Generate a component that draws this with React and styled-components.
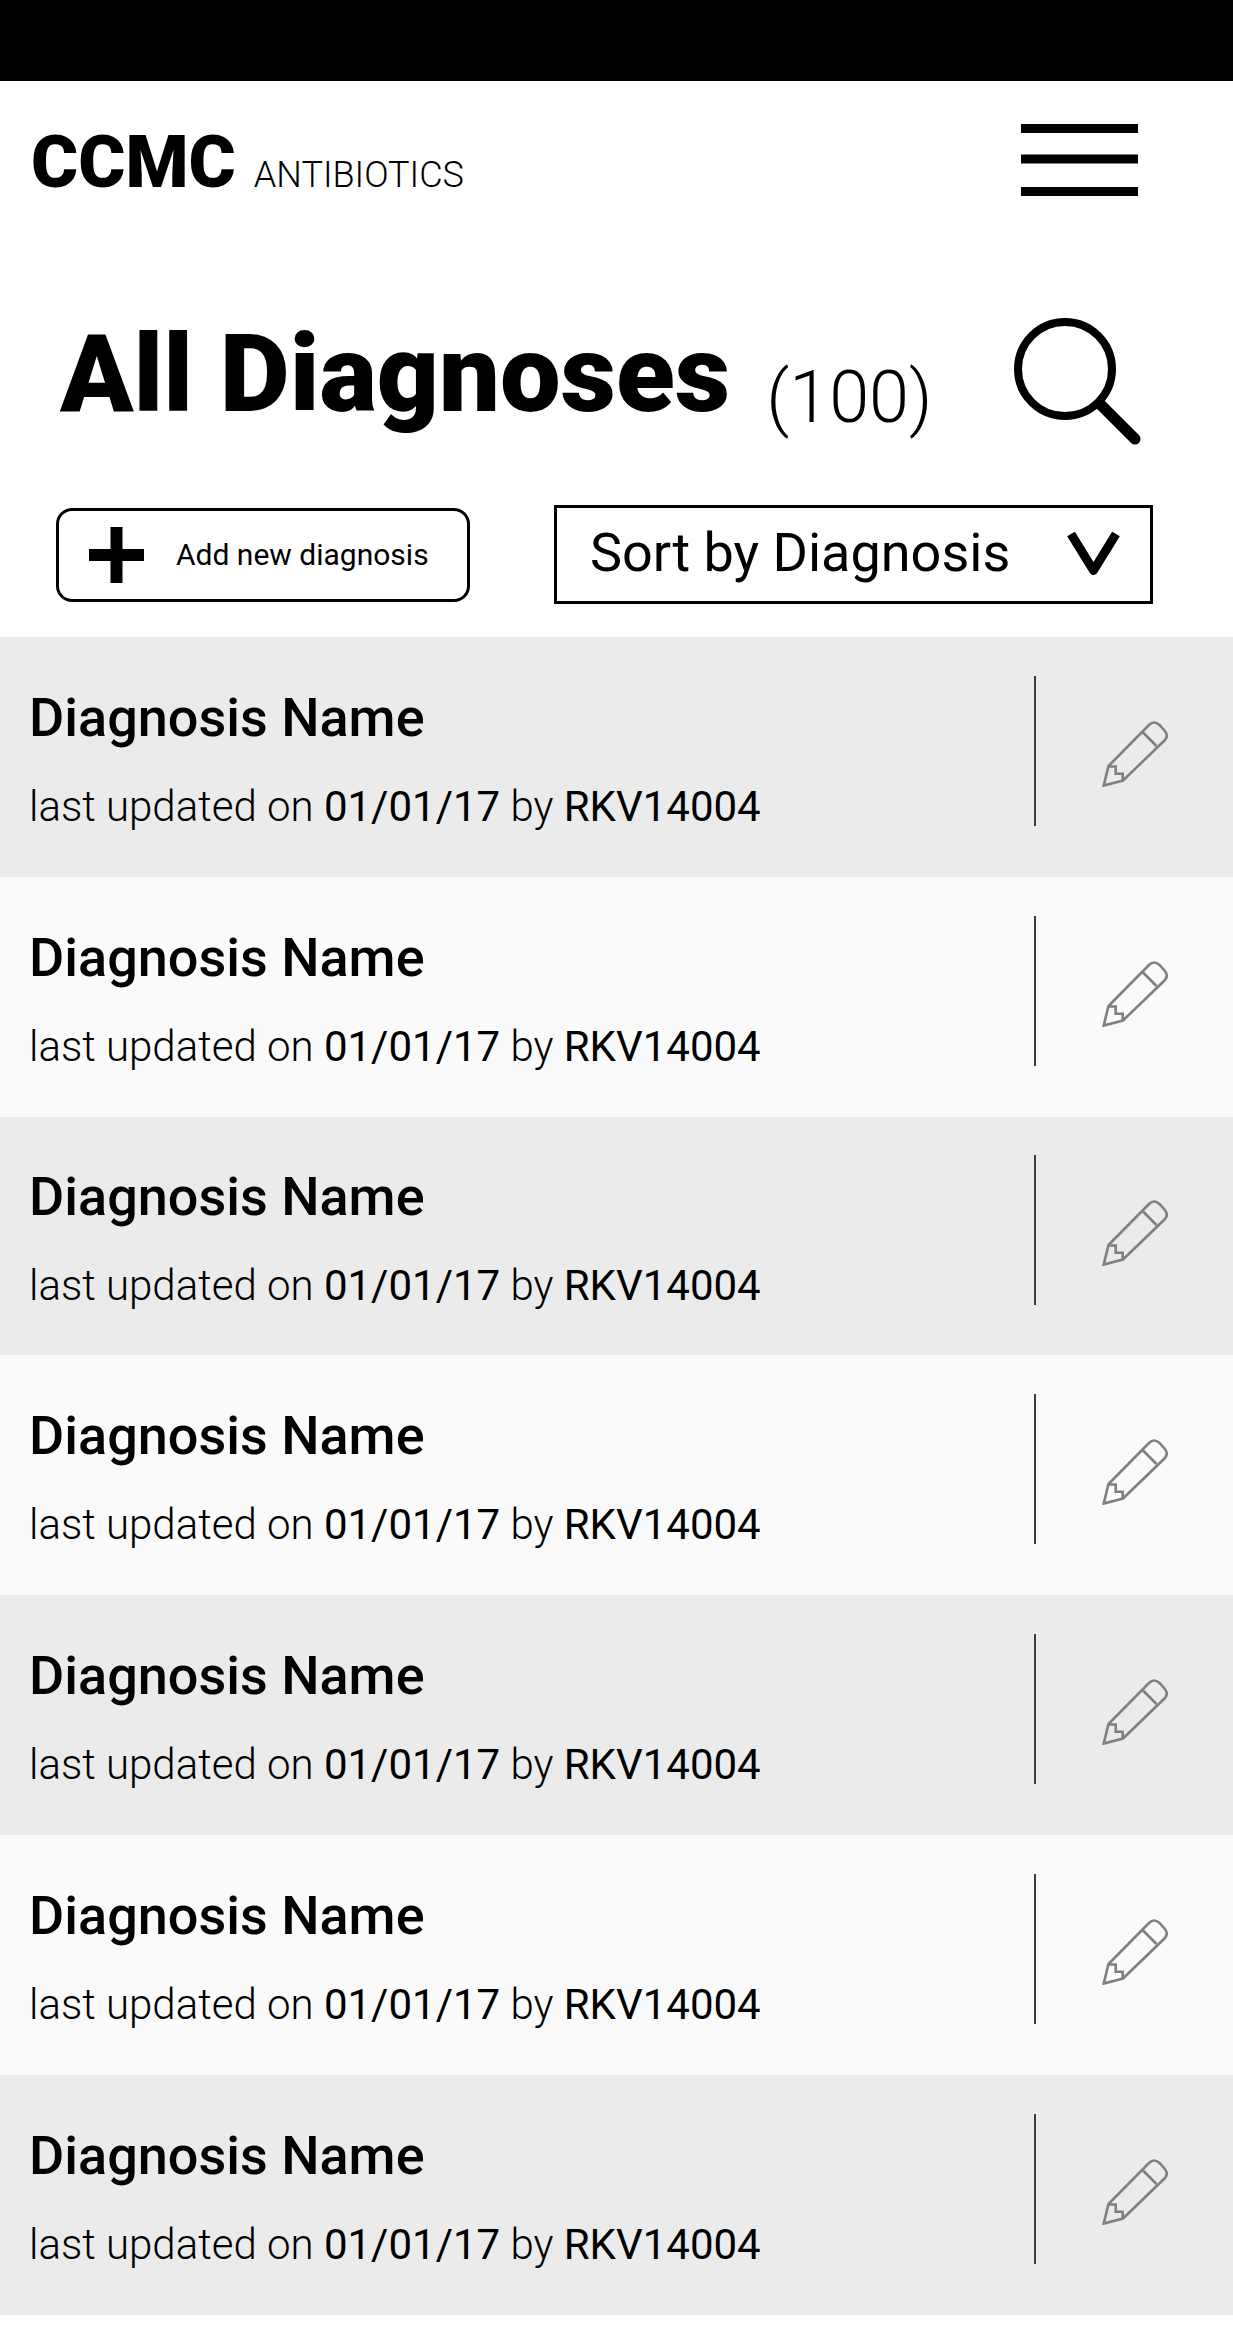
import React from "react";
import styled, { createGlobalStyle } from "styled-components";

const GlobalStyle = createGlobalStyle`
  *, *::before, *::after { box-sizing: border-box; }
  body {
    margin: 0;
    background: #fff;
    color: #000;
    font-family: Roboto, "Liberation Sans", sans-serif;
  }
  h1, h2, p, ul { margin: 0; padding: 0; }
  button { font: inherit; color: inherit; background: none; border: 0; padding: 0; cursor: pointer; }
  svg { display: block; }
`;

const StatusBar = styled.div`
  height: 81px;
  background: #000;
`;

const Header = styled.header`
  display: flex;
  justify-content: space-between;
  align-items: center;
  height: 158px;
  padding: 0 95px 0 31px;
`;

const Brand = styled.a`
  display: flex;
  align-items: baseline;
  gap: 18px;
  padding-top: 6px;
  color: inherit;
  text-decoration: none;
`;

const BrandName = styled.strong`
  font-size: 72px;
  line-height: 84px;
  font-weight: 900;
`;

const BrandSub = styled.span`
  font-size: 36px;
  font-weight: 300;
`;

const TitleBar = styled.div`
  display: flex;
  align-items: flex-end;
  justify-content: space-between;
  padding: 63px 92px 59px 60px;
`;

const Title = styled.div`
  display: flex;
  align-items: flex-end;
  gap: 36px;
`;

const Heading = styled.h1`
  font-size: 108px;
  line-height: 144px;
  font-weight: 900;
`;

const Count = styled.span`
  font-size: 72px;
  line-height: 96px;
  font-weight: 300;
`;

const Toolbar = styled.div`
  display: flex;
  align-items: center;
  justify-content: space-between;
  padding: 0 80px 33px 56px;
`;

const AddButton = styled.button`
  display: flex;
  align-items: center;
  gap: 32px;
  height: 94px;
  padding: 0 38px 0 30px;
  border: 3px solid #000;
  border-radius: 16px;
  font-size: 30px;
`;

const SortBox = styled.div`
  display: grid;
  align-items: center;
  width: 599px;
  height: 99px;
  border: 3px solid #000;

  & > * { grid-area: 1 / 1; }
  & > svg { justify-self: end; margin-right: 30px; pointer-events: none; }
`;

const SortSelect = styled.select`
  appearance: none;
  width: 100%;
  height: 100%;
  padding: 0 100px 4px 33px;
  border: 0;
  background: transparent;
  color: inherit;
  font: 400 54px Roboto, "Liberation Sans", sans-serif;
`;

const List = styled.ul`
  list-style: none;
`;

const Row = styled.li`
  display: flex;
  align-items: center;
  height: ${(p) => (p.$compact ? 238 : 240)}px;
  padding: 0 65px 12px 29px;
  background: #fafafa;

  &:nth-child(odd) { background: #ebebeb; }
`;

const Details = styled.div`
  flex: 1;
  padding-top: 16px;
`;

const Name = styled.h2`
  font-size: 54px;
  line-height: 64px;
  font-weight: 500;
`;

const Updated = styled.p`
  margin-top: 32px;
  font-size: 42px;
  line-height: 50px;
  font-weight: 300;

  & > * { font-weight: 400; }
`;

const EditCell = styled.div`
  display: flex;
  align-items: center;
  height: 150px;
  padding: 6px 0 0 66px;
  border-left: 2px solid #3c3c3c;
`;

const MenuIcon = () => (
  <svg width="117" height="73" viewBox="0 0 117 73" aria-hidden="true">
    <path d="M0 4.500h117M0 35h117M0 67.500h117" stroke="#000" strokeWidth="9" />
  </svg>
);

const SearchIcon = () => (
  <svg width="127" height="128" viewBox="0 0 127 128" fill="none" stroke="#000" aria-hidden="true">
    <circle cx="51" cy="51" r="47" strokeWidth="8" />
    <path d="M87 87l34 34" strokeWidth="11" strokeLinecap="round" />
  </svg>
);

const PlusIcon = () => (
  <svg width="55" height="56" viewBox="0 0 55 56" aria-hidden="true">
    <path d="M27.5 0v56M0 28h55" stroke="#000" strokeWidth="12" />
  </svg>
);

const ChevronIcon = () => (
  <svg width="53" height="45" viewBox="0 0 53 45" fill="none" aria-hidden="true">
    <path d="M4 2l22.5 36.500L49 2" stroke="#000" strokeWidth="9" strokeLinejoin="round" />
  </svg>
);

const PencilIcon = () => (
  <svg width="66" height="66" viewBox="0 0 66 66" fill="none" stroke="#808080" strokeWidth="2.600" aria-hidden="true">
    <path d="M1.700 64.600L6.500 45 47 4q5-5 10.500 0l5 5.500q4.500 5.500 0 10L21 59.500z" />
    <path d="M40.500 11L54.500 25M6.500 45.500h7.200v7.200h7v7" />
  </svg>
);

const diagnoses = Array.from({ length: 7 }, (_, id) => ({
  id,
  name: "Diagnosis Name",
  date: "01/01/17",
  user: "RKV14004",
}));

export default function App() {
  return (
    <>
      <GlobalStyle />
      <StatusBar />
      <Header>
        <Brand href="#">
          <BrandName>CCMC</BrandName>
          <BrandSub>ANTIBIOTICS</BrandSub>
        </Brand>
        <button type="button" aria-label="Menu">
          <MenuIcon />
        </button>
      </Header>
      <main>
        <TitleBar>
          <Title>
            <Heading>All Diagnoses</Heading>
            <Count>(100)</Count>
          </Title>
          <button type="button" aria-label="Search">
            <SearchIcon />
          </button>
        </TitleBar>
        <Toolbar>
          <AddButton type="button">
            <PlusIcon />
            Add new diagnosis
          </AddButton>
          <SortBox>
            <SortSelect aria-label="Sort order" defaultValue="diagnosis">
              <option value="diagnosis">Sort by Diagnosis</option>
            </SortSelect>
            <ChevronIcon />
          </SortBox>
        </Toolbar>
        <List>
          {diagnoses.map((d) => (
            <Row key={d.id} $compact={d.id === 2}>
              <Details>
                <Name>{d.name}</Name>
                <Updated>
                  last updated on <time>{d.date}</time> by <span>{d.user}</span>
                </Updated>
              </Details>
              <EditCell>
                <button type="button" aria-label={`Edit ${d.name}`}>
                  <PencilIcon />
                </button>
              </EditCell>
            </Row>
          ))}
        </List>
      </main>
    </>
  );
}
